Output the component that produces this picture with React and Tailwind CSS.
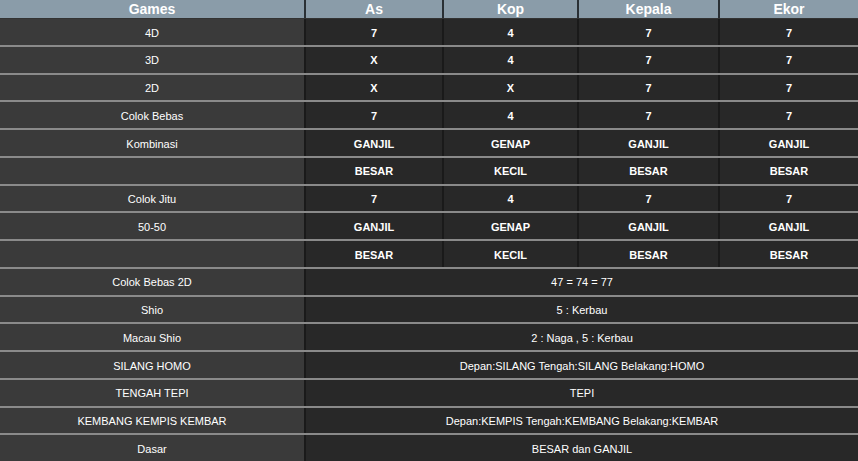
export default function App() {
  const cols = ["w-[306px]", "w-[138px]", "w-[135px]", "w-[141px]", "flex-1"];
  const rows = [
    ["4D", "7", "4", "7", "7"],
    ["3D", "X", "4", "7", "7"],
    ["2D", "X", "X", "7", "7"],
    ["Colok Bebas", "7", "4", "7", "7"],
    ["Kombinasi", "GANJIL", "GENAP", "GANJIL", "GANJIL"],
    ["", "BESAR", "KECIL", "BESAR", "BESAR"],
    ["Colok Jitu", "7", "4", "7", "7"],
    ["50-50", "GANJIL", "GENAP", "GANJIL", "GANJIL"],
    ["", "BESAR", "KECIL", "BESAR", "BESAR"],
    ["Colok Bebas 2D", "47 = 74 = 77"],
    ["Shio", "5 : Kerbau"],
    ["Macau Shio", "2 : Naga , 5 : Kerbau"],
    ["SILANG HOMO", "Depan:SILANG Tengah:SILANG Belakang:HOMO"],
    ["TENGAH TEPI", "TEPI"],
    ["KEMBANG KEMPIS KEMBAR", "Depan:KEMPIS Tengah:KEMBANG Belakang:KEMBAR"],
    ["Dasar", "BESAR dan GANJIL"],
  ];
  const heads = ["Games", "As", "Kop", "Kepala", "Ekor"];
  return (
    <div className="w-[858px] h-[461px] bg-[#1c1c1c] overflow-hidden text-white" style={{ fontFamily: '"Liberation Sans", Arial, sans-serif' }}>
      <div className="flex h-[19px] bg-[#8a9ca9] border-b border-[#333]">
        {heads.map((h, i) => (
          <div key={i} className={`${cols[i]} flex items-center justify-center text-[14px] font-bold border-r-2 border-[#2a3035] last:border-r-0`}>{h}</div>
        ))}
      </div>
      {rows.map((r, ri) => (
        <div key={ri} className="flex h-[27.75px] border-b-2 border-[#8a8a8a] text-[11px]">
          <div className={`${cols[0]} bg-[#3a3a3a] flex items-center justify-center border-r-2 border-[#1a1a1a] pt-[2px]`}>{r[0]}</div>
          {r.length === 2 ? (
            <div className="flex-1 bg-[#282828] flex items-center justify-center pt-[2px]">{r[1]}</div>
          ) : (
            r.slice(1).map((c, ci) => (
              <div key={ci} className={`${cols[ci + 1]} bg-[#282828] flex items-center justify-center font-bold pt-[2px] border-r-2 border-[#1a1a1a] last:border-r-0`}>{c}</div>
            ))
          )}
        </div>
      ))}
    </div>
  );
}
